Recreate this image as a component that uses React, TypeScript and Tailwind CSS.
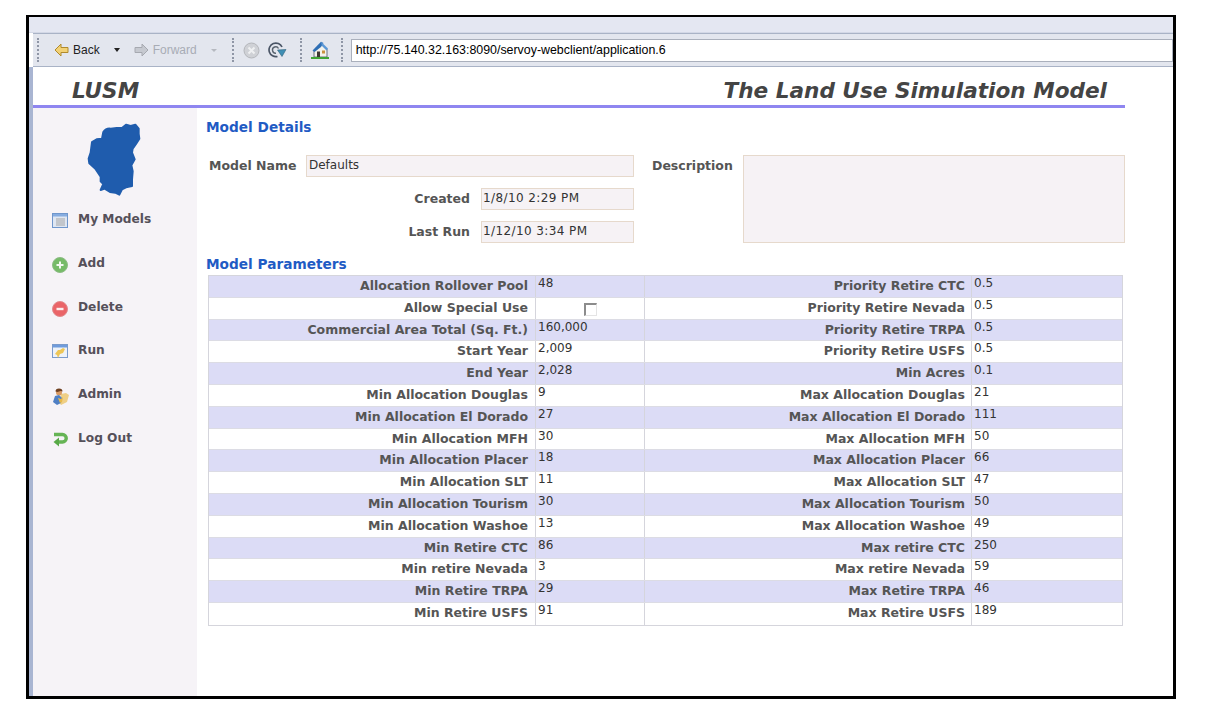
import React from 'react';

const rows: [string, string, string, string][] = [
  ['Allocation Rollover Pool', '48', 'Priority Retire CTC', '0.5'],
  ['Allow Special Use', '', 'Priority Retire Nevada', '0.5'],
  ['Commercial Area Total (Sq. Ft.)', '160,000', 'Priority Retire TRPA', '0.5'],
  ['Start Year', '2,009', 'Priority Retire USFS', '0.5'],
  ['End Year', '2,028', 'Min Acres', '0.1'],
  ['Min Allocation Douglas', '9', 'Max Allocation Douglas', '21'],
  ['Min Allocation El Dorado', '27', 'Max Allocation El Dorado', '111'],
  ['Min Allocation MFH', '30', 'Max Allocation MFH', '50'],
  ['Min Allocation Placer', '18', 'Max Allocation Placer', '66'],
  ['Min Allocation SLT', '11', 'Max Allocation SLT', '47'],
  ['Min Allocation Tourism', '30', 'Max Allocation Tourism', '50'],
  ['Min Allocation Washoe', '13', 'Max Allocation Washoe', '49'],
  ['Min Retire CTC', '86', 'Max retire CTC', '250'],
  ['Min retire Nevada', '3', 'Max retire Nevada', '59'],
  ['Min Retire TRPA', '29', 'Max Retire TRPA', '46'],
  ['Min Retire USFS', '91', 'Max Retire USFS', '189'],
];

const Gripper = () => (
  <div className="h-[24px] w-[2px] shrink-0 border-l-2 border-dotted border-[#8f96a6]" />
);

const ListIcon = () => (
  <svg width="16" height="15" viewBox="0 0 16 15">
    <rect x="0.5" y="0.5" width="15" height="14" fill="#dfe6f2" stroke="#6f96cc" />
    <rect x="1" y="1" width="14" height="2.5" fill="#86ace0" />
    <path d="M4 6h9M4 8h9M4 10h9M4 12h9" stroke="#a5a5a5" />
  </svg>
);

const AddIcon = () => (
  <svg width="16" height="16" viewBox="0 0 16 16">
    <circle cx="8" cy="8" r="7.5" fill="#76bb68" stroke="#8dbb85" />
    <path d="M8 4.500v7M4.500 8h7" stroke="#f2f8f0" strokeWidth="2" />
  </svg>
);

const DeleteIcon = () => (
  <svg width="16" height="16" viewBox="0 0 16 16">
    <circle cx="8" cy="8" r="7.5" fill="#ea6468" stroke="#e08a8d" />
    <path d="M4.500 8h7" stroke="#fbeeee" strokeWidth="2.4" />
  </svg>
);

const RunIcon = () => (
  <svg width="16" height="15" viewBox="0 0 16 15">
    <rect x="0.5" y="0.5" width="15" height="13" fill="#eef2f9" stroke="#7a9bcc" />
    <rect x="1" y="1" width="14" height="2.500" fill="#6f9bdc" />
    <path d="M3 10l3-4 2 0 3-2 2 1-2 4-3 1-2 4-1-3z" fill="#eec657" />
  </svg>
);

const AdminIcon = () => (
  <svg width="18" height="17" viewBox="0 0 18 17">
    <path d="M9 6l5-1 3 2-2 7-6 3-2-3z" fill="#efcf86" />
    <circle cx="7" cy="4.500" r="3" fill="#d99a63" />
    <path d="M3.500 3.500a3.500 3 0 0 1 7 0l-2-.5-3 1z" fill="#6f4020" />
    <path d="M1 14l2-6 4-1 3 3-1 5-4 2z" fill="#4f7fc4" />
    <path d="M6 10l3 1 2-2-1 5-2 1z" fill="#e9b949" />
  </svg>
);

const LogOutIcon = () => (
  <svg width="16" height="15" viewBox="0 0 16 15">
    <path d="M2 2.500h8.500a3.500 3.500 0 0 1 0 7.500H5" fill="none" stroke="#66b455" strokeWidth="3.400" />
    <path d="M7 5.500L1.500 10 7 14.500z" fill="#58a947" />
  </svg>
);

const nav = [
  { label: 'My Models', icon: <ListIcon /> },
  { label: 'Add', icon: <AddIcon /> },
  { label: 'Delete', icon: <DeleteIcon /> },
  { label: 'Run', icon: <RunIcon /> },
  { label: 'Admin', icon: <AdminIcon /> },
  { label: 'Log Out', icon: <LogOutIcon /> },
];

const App: React.FC = () => {
  return (
    <div className="w-[1210px] h-[707px] bg-white pl-[26px] pt-[15px] overflow-hidden font-['DejaVu_Sans',sans-serif]">
      <div className="w-[1150px] h-[684px] border-[3px] border-t-2 border-black flex flex-col overflow-hidden">
        <div className="h-[16px] shrink-0 bg-[#e4e7f2] border-b border-[#d3d8e6]" />
        {/* browser toolbar */}
        <div className="h-[34px] shrink-0 ml-[4px] flex items-center bg-[#e3e6ee] border-y border-[#a9b3c6] font-['Liberation_Sans',sans-serif] text-[12px] text-[#222]">
          <div className="ml-[4px]"><Gripper /></div>
          <svg className="ml-[15px]" width="15" height="14" viewBox="0 0 15 14">
            <path d="M7 1L1 7l6 6V9.500h7v-5H7z" fill="#f2d175" stroke="#b08a2c" />
          </svg>
          <span className="ml-[4px]">Back</span>
          <span className="ml-[14px] w-0 h-0 border-x-[3px] border-x-transparent border-t-[4px] border-t-[#222]" />
          <svg className="ml-[14px]" width="15" height="14" viewBox="0 0 15 14">
            <path d="M8 1l6 6-6 6V9.500H1v-5h7z" fill="#c6c9d0" stroke="#a6a9b0" />
          </svg>
          <span className="ml-[4px] text-[#a8acb5]">Forward</span>
          <span className="ml-[14px] w-0 h-0 border-x-[3px] border-x-transparent border-t-[3px] border-t-[#b6b9c0]" />
          <div className="ml-[15px]"><Gripper /></div>
          <svg className="ml-[9px]" width="17" height="17" viewBox="0 0 17 17">
            <circle cx="8.500" cy="8.500" r="7.500" fill="#cfd1d6" stroke="#b4b6bb" />
            <path d="M5.500 5.500l6 6M11.500 5.500l-6 6" stroke="#eff0f2" strokeWidth="2" />
          </svg>
          <svg className="ml-[7px]" width="20" height="16" viewBox="0 0 20 16">
            <path d="M10.500 14.500A6.800 6.800 0 1 1 15 5" fill="none" stroke="#4a5566" strokeWidth="1.700" />
            <path d="M9 11.200A3.200 3.200 0 1 1 11.500 6.500" fill="none" stroke="#59636f" strokeWidth="1.400" />
            <path d="M10.500 8l8.500-.5-4 7z" fill="#3f8fb5" stroke="#2f5f78" strokeWidth="0.600" />
          </svg>
          <div className="ml-[13px]"><Gripper /></div>
          <svg className="ml-[9px]" width="18" height="18" viewBox="0 0 18 18">
            <path d="M3 9l8-6 5 5v8H3z" fill="#f4f3ec" stroke="#4b5468" strokeWidth="0.800" />
            <path d="M1.500 9.500L10 .8l2.500 1.200L10 6 3.500 11z" fill="#2f6fb5" />
            <path d="M10 .8l7 6.700-1.500 2L11 5z" fill="#5c98d6" />
            <rect x="6" y="10.500" width="3" height="5.500" fill="#3f3a35" />
            <rect x="11" y="9.500" width="3" height="3" fill="#c9933f" />
            <path d="M0 16h18v2H0z" fill="#3fa535" />
          </svg>
          <div className="ml-[12px]"><Gripper /></div>
          <div className="ml-[8px] flex-1 h-[23px] bg-white border border-[#aab0bc] pl-[4px] flex items-center text-[12.4px] text-black whitespace-nowrap">
            http://75.140.32.163:8090/servoy-webclient/application.6
          </div>
        </div>
        <div className="flex-1 flex min-h-0">
          <div className="w-[4px] shrink-0 bg-[#a9b5d2]" />
          <div className="flex-1 flex flex-col min-w-0">
            {/* page header */}
            <div className="h-[38px] shrink-0 w-[1092px] flex items-center justify-between pt-[10px] pl-[39px] pr-[18px] font-bold italic text-[21.600px] text-[#444]">
              <span>LUSM</span>
              <span>The Land Use Simulation Model</span>
            </div>
            <div className="h-[3px] shrink-0 w-[1092px] bg-[#8f86f0]" />
            <div className="flex-1 flex min-h-0">
              {/* sidebar */}
              <div className="w-[164px] shrink-0 bg-[#f6f3f7] pl-[19px]">
                <svg className="ml-[28px] mt-[10px] block" width="65" height="82" viewBox="0 0 195 246">
                  <path
                    d="M70 42Q78 30 92 32L110 30 126 30 138 20 152 24 166 20 176 32 176 48 178 62 168 78 158 92 156 104 164 124 154 142 158 160 156 184 156 204 138 208 126 214 118 230 106 224 90 222 74 212 62 216 70 198 62 190 62 176 46 152 28 136 26 122 32 104 36 72 50 64 66 62z"
                    fill="#1f5cad"
                    stroke="#1f5cad"
                    strokeWidth="6"
                    strokeLinejoin="round"
                  />
                </svg>
                <div className="mt-[11px] flex flex-col gap-[27.8px]">
                  {nav.map((item) => (
                    <div key={item.label} className="h-[16px] flex items-start">
                      <div className="w-[26px] mt-[2px] shrink-0">{item.icon}</div>
                      <span className="text-[12.2px] leading-[16px] font-bold text-[#55505a]">{item.label}</span>
                    </div>
                  ))}
                </div>
              </div>
              {/* main */}
              <div className="flex-1 pl-[9px] text-[#555] font-bold text-[12.5px]">
                <h2 className="mt-[11px] h-[16px] leading-[16px] text-[13.7px] font-bold text-[#1f5bc4]">Model Details</h2>
                <div className="mt-[20px] flex w-[919px]">
                  <div className="w-[428px] pl-[3px]">
                    <div className="flex items-center h-[22px]">
                      <span className="w-[97px] shrink-0 pt-[1px]">Model Name</span>
                      <div className="flex-1 h-full bg-[#f6f2f5] border border-[#e6d9cc] pl-[2px] font-normal text-[12px] text-[#333] leading-[18px]">Defaults</div>
                    </div>
                    <div className="flex items-center justify-end h-[22px] mt-[11px]">
                      <span className="pt-[1px]">Created</span>
                      <div className="ml-[11px] w-[153px] h-full bg-[#f6f2f5] border border-[#e6d9cc] pl-[1px] font-normal text-[12px] tracking-[0.4px] text-[#333] leading-[18px]">1/8/10 2:29 PM</div>
                    </div>
                    <div className="flex items-center justify-end h-[22px] mt-[11px]">
                      <span className="pt-[1px]">Last Run</span>
                      <div className="ml-[11px] w-[153px] h-full bg-[#f6f2f5] border border-[#e6d9cc] pl-[1px] font-normal text-[12px] tracking-[0.4px] text-[#333] leading-[18px]">1/12/10 3:34 PM</div>
                    </div>
                  </div>
                  <div className="ml-[18px] flex flex-1">
                    <span className="w-[91px] shrink-0 h-[22px] leading-[22px]">Description</span>
                    <div className="flex-1 h-[88px] bg-[#f6f2f5] border border-[#e6d9cc]" />
                  </div>
                </div>
                <h2 className="mt-[13px] h-[16px] leading-[16px] text-[13.7px] font-bold text-[#1f5bc4]">Model Parameters</h2>
                {/* parameters */}
                <div className="ml-[2px] mt-[3px] w-[915px] border border-[#d5d5dc]">
                  {rows.map((r, i) => (
                    <div
                      key={r[0]}
                      className={`grid grid-cols-[326px_109px_327px_1fr] h-[21.8px] border-b border-[#dcdce4] last:border-b-0 ${i % 2 === 0 ? 'bg-[#dcdcf6]' : 'bg-white'}`}
                    >
                      <div className="text-right pr-[7px] leading-[20px] whitespace-nowrap">{r[0]}</div>
                      <div className="border-l border-[#d5d5dc] pl-[2px] font-normal text-[12px] text-[#333] leading-[15px]">
                        {r[1] === '' ? (
                          <div className="ml-[46px] mt-[5px] w-[13px] h-[13px] border-t-2 border-l-2 border-[#8c8c8c] border-r border-b border-r-[#e4e4e4] border-b-[#e4e4e4] bg-white" />
                        ) : (
                          r[1]
                        )}
                      </div>
                      <div className="border-l border-[#d5d5dc] text-right pr-[6px] leading-[20px] whitespace-nowrap">{r[2]}</div>
                      <div className="border-l border-[#d5d5dc] pl-[2px] font-normal text-[12px] text-[#333] leading-[15px]">{r[3]}</div>
                    </div>
                  ))}
                </div>
              </div>
            </div>
          </div>
        </div>
      </div>
    </div>
  );
};

export default App;
